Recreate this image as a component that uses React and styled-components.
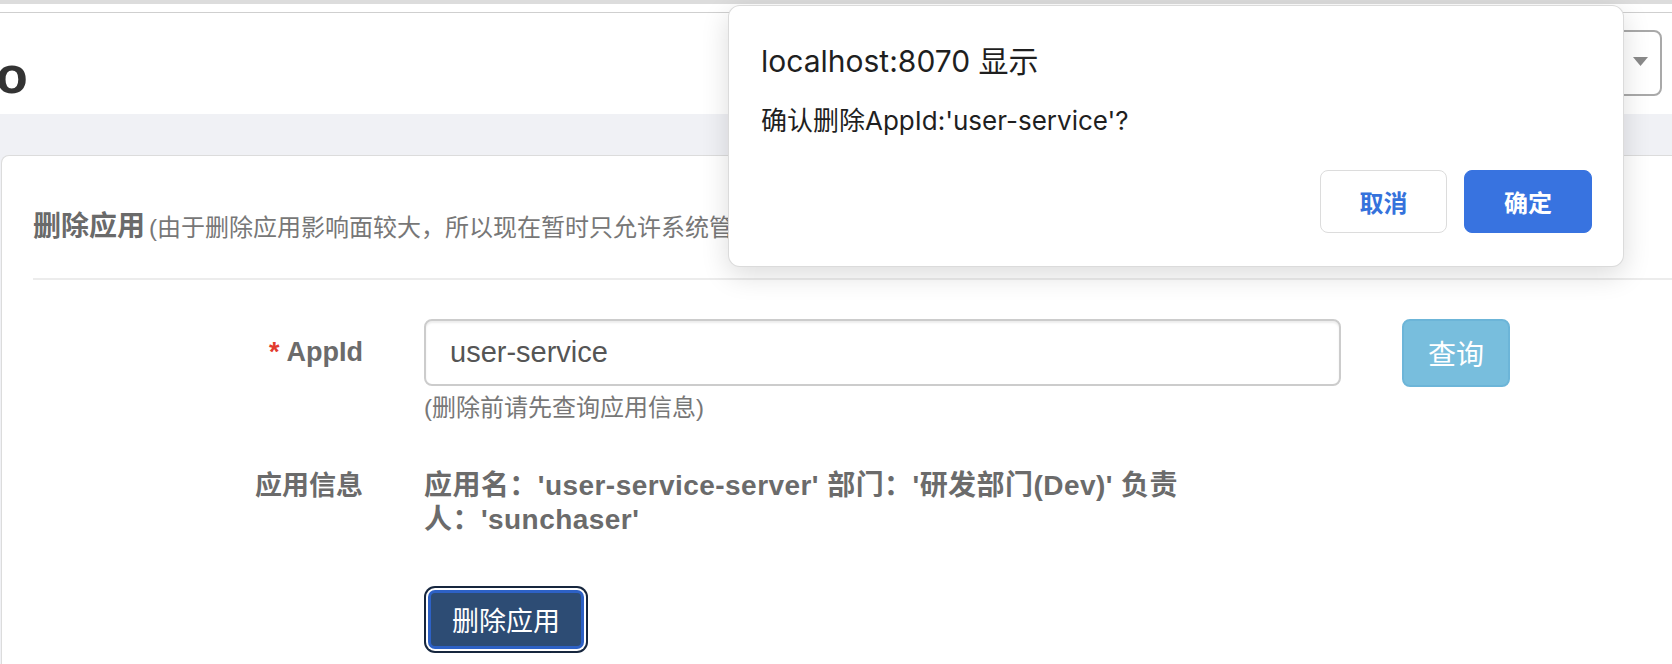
import React from "react";
import styled, { createGlobalStyle } from "styled-components";

const Global = createGlobalStyle`
  html, body {
    margin: 0;
    padding: 0;
    width: 1672px;
    height: 664px;
    overflow: hidden;
    background: #ffffff;
    font-family: "Liberation Sans", "Noto Sans CJK SC", sans-serif;
  }
  * { box-sizing: border-box; }
`;

const Page = styled.div`
  position: relative;
  width: 1672px;
  height: 664px;
  overflow: hidden;
`;

const TopStrip = styled.div`
  height: 4px;
  background: #dcdcdc;
`;

const Spacer = styled.div`
  height: 8px;
  background: #ffffff;
`;

const Header = styled.header`
  height: 102px;
  border-top: 1.5px solid #cfcfcf;
  display: flex;
  align-items: flex-start;
  justify-content: space-between;
  background: #ffffff;
`;

const Logo = styled.span`
  margin-left: -4px;
  margin-top: 34px;
  font-family: "Liberation Sans", sans-serif;
  font-weight: 700;
  font-size: 52px;
  line-height: 56px;
  color: #333333;
`;

const Select = styled.div`
  margin-top: 17px;
  margin-right: 10px;
  width: 300px;
  height: 66px;
  border: 2px solid #a9a9a9;
  border-radius: 8px;
  display: flex;
  align-items: center;
  justify-content: flex-end;
  padding: 0 12px 4px 0;
  color: #888888;
  font-size: 16px;
`;

const Band = styled.div`
  background: #f0f1f5;
  padding: 41px 0 0 1px;
`;

const Card = styled.section`
  margin-right: -20px;
  background: #ffffff;
  border: 1.5px solid #dcdcdc;
  border-bottom: none;
  border-radius: 8px 8px 0 0;
  height: 520px;
`;

const TitleBar = styled.div`
  margin-left: 31px;
  padding: 51px 0 31px;
  border-bottom: 2px solid #ececec;
  display: flex;
  align-items: baseline;
  white-space: nowrap;
`;

const Title = styled.h2`
  margin: 0;
  font-size: 28px;
  line-height: 40px;
  font-weight: 700;
  color: #6a6a6a;
`;

const Subtitle = styled.span`
  margin-left: 4px;
  font-size: 24px;
  color: #777777;
`;

const Form = styled.div`
  padding: 39px 0 0 31px;
  display: flex;
  flex-direction: column;
`;

const Row = styled.div`
  display: grid;
  grid-template-columns: 331px 917px auto;
  column-gap: 60px;
  align-items: start;
  margin-top: ${(p) => p.$gap || 0}px;
`;

const Label = styled.label`
  text-align: right;
  font-size: 27px;
  font-weight: 700;
  color: #6b6b6b;
  line-height: ${(p) => p.$lh || 34}px;
  padding-right: 1px;
`;

const Required = styled.span`
  color: #e23b2e;
  margin-right: 7px;
`;

const Field = styled.div`
  display: flex;
  flex-direction: column;
`;

const Input = styled.input`
  width: 917px;
  height: 67px;
  border: 2px solid #cccccc;
  border-radius: 8px;
  padding: 0 24px;
  font-family: "Liberation Sans", sans-serif;
  font-size: 29px;
  color: #555555;
  box-shadow: inset 0 2px 2px rgba(0, 0, 0, 0.075);
  outline: none;
`;

const Help = styled.div`
  margin-top: 9px;
  font-size: 24px;
  line-height: 26px;
  color: #777777;
`;

const QueryButton = styled.button`
  margin-left: 1px;
  width: 108px;
  height: 68px;
  border: 2px solid #6cb5d8;
  border-radius: 8px;
  background: #78bedd;
  color: #ffffff;
  font-family: "Liberation Sans", "Noto Sans CJK SC", sans-serif;
  font-size: 28px;
`;

const InfoText = styled.div`
  font-size: 28px;
  font-weight: 700;
  letter-spacing: 0.45px;
  line-height: 34px;
  color: #6b6b6b;
  white-space: nowrap;
`;

const DeleteButton = styled.button`
  margin: 6px 0 0 4px;
  width: 156px;
  height: 59px;
  border: 3px solid #2d61c6;
  border-radius: 7px;
  background: #2d4c74;
  color: #ffffff;
  font-family: "Liberation Sans", "Noto Sans CJK SC", sans-serif;
  font-size: 27px;
  box-shadow: 0 0 0 2px #ffffff, 0 0 0 4px #16263e;
`;

const Dialog = styled.div`
  position: absolute;
  left: 728px;
  top: 5px;
  width: 896px;
  height: 262px;
  background: #ffffff;
  border: 1px solid rgba(0, 0, 0, 0.14);
  border-radius: 12px;
  box-shadow: 0 8px 28px rgba(0, 0, 0, 0.14);
  padding: 35px 31px 0 32px;
  display: flex;
  flex-direction: column;
  font-family: "Inter", "Noto Sans CJK SC", sans-serif;
  color: #1f1f1f;
`;

const DialogTitle = styled.div`
  font-size: 30px;
  line-height: 40px;
`;

const DialogMessage = styled.div`
  margin-top: 22px;
  font-size: 26px;
  line-height: 36px;
`;

const DialogActions = styled.div`
  margin-top: 31px;
  display: flex;
  justify-content: flex-end;
  gap: 17px;
`;

const DialogButton = styled.button`
  width: ${(p) => (p.$primary ? 128 : 127)}px;
  height: 63px;
  border-radius: 8px;
  border: 1.5px solid ${(p) => (p.$primary ? "#3873e0" : "#dcdcdc")};
  background: ${(p) => (p.$primary ? "#3873e0" : "#ffffff")};
  color: ${(p) => (p.$primary ? "#ffffff" : "#3572dc")};
  font-family: "Inter", "Noto Sans CJK SC", sans-serif;
  font-size: 24px;
  font-weight: 700;
`;

function Caret() {
  return (
    <svg width="15" height="9" viewBox="0 0 15 9">
      <path d="M0 0 L15 0 L7.5 9 Z" fill="#8a8a8a" />
    </svg>
  );
}

export default function App() {
  return (
    <Page>
      <Global />
      <TopStrip />
      <Spacer />
      <Header>
        <Logo>o</Logo>
        <Select>
          <Caret />
        </Select>
      </Header>
      <Band>
        <Card>
          <TitleBar>
            <Title>删除应用</Title>
            <Subtitle>(由于删除应用影响面较大，所以现在暂时只允许系统管理员操作)</Subtitle>
          </TitleBar>
          <Form>
            <Row>
              <Label $lh={67}>
                <Required>*</Required>AppId
              </Label>
              <Field>
                <Input defaultValue="user-service" />
                <Help>(删除前请先查询应用信息)</Help>
              </Field>
              <QueryButton>查询</QueryButton>
            </Row>
            <Row $gap={48}>
              <Label>应用信息</Label>
              <InfoText>
                应用名：'user-service-server' 部门：'研发部门(Dev)' 负责
                <br />
                人：'sunchaser'
              </InfoText>
            </Row>
            <Row $gap={47}>
              <span />
              <div>
                <DeleteButton>删除应用</DeleteButton>
              </div>
            </Row>
          </Form>
        </Card>
      </Band>
      <Dialog role="dialog">
        <DialogTitle>localhost:8070 显示</DialogTitle>
        <DialogMessage>确认删除AppId:'user-service'?</DialogMessage>
        <DialogActions>
          <DialogButton>取消</DialogButton>
          <DialogButton $primary>确定</DialogButton>
        </DialogActions>
      </Dialog>
    </Page>
  );
}
